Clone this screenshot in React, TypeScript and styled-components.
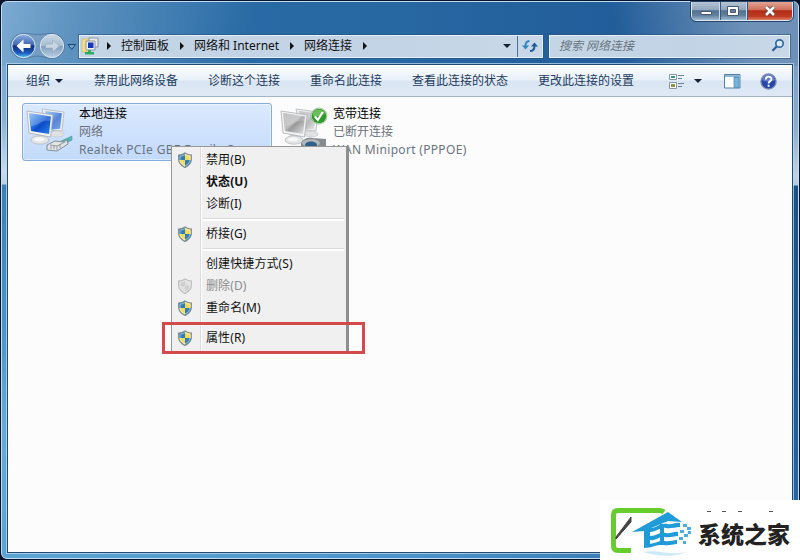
import React from "react";
import styled, { createGlobalStyle, css } from "styled-components";

const Global = createGlobalStyle`
  * { box-sizing: border-box; }
  body { margin: 0; overflow: hidden; background: #0b1c38; }
`;

const Desktop = styled.div`
  position: relative;
  width: 800px;
  height: 560px;
  overflow: hidden;
  background: #07142e;
  font: 12px/18px "Noto Sans", "Noto Sans CJK SC", sans-serif;
  color: #111;
  white-space: nowrap;
`;

const Frame = styled.div`
  display: flex;
  flex-direction: column;
  width: 798px;
  height: 558px;
  margin: 0 1px;
  position: relative;
  top: 1px;
  border: 1px solid #c3dcf0;
  border-radius: 6px;
  padding: 0 5px 5px;
  background:
    linear-gradient(100deg, rgba(150, 190, 222, 0.75) 0, rgba(130, 172, 208, 0.6) 70px, rgba(60, 120, 175, 0) 250px) 0 0 / 100% 64px no-repeat,
    linear-gradient(80deg, rgba(120, 150, 185, 0) 610px, rgba(125, 155, 190, 0.85) 740px) 0 0 / 100% 64px no-repeat,
    linear-gradient(#7fa9cf 0, #86afd2 50px, #c5dcec 105px, #b9d5e8 118px, #3981b2 119px, #4c97c8 270px, #65abd8 360px, #5aa4d2 490px) 0 64px / 6px 100% no-repeat,
    linear-gradient(#7f9fc2 0, #8fabc9 60px, #c3d3e4 110px, #b5cadd 119px, #1c5387 120px, #1e5990 300px, #2a6da8 490px) 790px 64px / 6px 100% no-repeat,
    linear-gradient(90deg, #5aa5d3, #4c94c8 50%, #2a6aa4) 0 100% / 100% 7px no-repeat,
    linear-gradient(90deg, #2b70aa, #2767a2 50%, #1c5593);
`;

const TitleBar = styled.div`
  display: flex;
  justify-content: flex-end;
  height: 32px;
  flex: none;
`;

const Caption = styled.div`
  display: flex;
  height: 19px;
  border: 1px solid #dde8f2;
  border-top: 0;
  border-radius: 0 0 5px 5px;
  overflow: hidden;
  outline: 1px solid #24466c;
`;

const CaptionButton = styled.div<{ $w: number; $close?: boolean }>`
  display: grid;
  place-items: center;
  width: ${(p) => p.$w}px;
  border-left: 1px solid #c9d8e7;
  box-shadow: inset 1px 0 0 #39597c;
  background: ${(p) =>
    p.$close
      ? "linear-gradient(#e3a493, #cf6e5a 45%, #b32d16 48%, #bd3b22 80%, #e08067)"
      : "linear-gradient(#b5c4d4, #8fa5bc 45%, #52708f 48%, #64829f 75%, #9fbcd5)"};
  &:first-child { border-left: 0; box-shadow: none; }
`;

const NavRow = styled.div`
  display: flex;
  align-items: center;
  height: 24px;
  flex: none;
  padding-left: 2px;
`;

const NavButtons = styled.div`
  width: 70px;
  height: 28px;
  flex: none;
`;

const Field = styled.div<{ $w: number; $gap?: number }>`
  display: flex;
  align-items: center;
  width: ${(p) => p.$w}px;
  height: 23px;
  flex: none;
  margin-left: ${(p) => p.$gap ?? 0}px;
  border: 1px solid #e4eef7;
  box-shadow: 0 0 0 1px rgba(44, 84, 125, 0.6);
  background: linear-gradient(90deg, #c4d5e5, #c1d3e5 60%, #c8d8e8);
`;

const AddressIcon = styled.div`
  width: 21px;
  height: 19px;
  margin-left: 1px;
`;

const Crumb = styled.span<{ $w: number }>`
  width: ${(p) => p.$w}px;
`;

const Arrow = styled.i<{ $dir: "right" | "down"; $m: string }>`
  width: 0;
  height: 0;
  flex: none;
  margin: ${(p) => p.$m};
  ${(p) =>
    p.$dir === "right"
      ? css`border: solid transparent; border-width: 4px 0 4px 4px; border-left-color: #111;`
      : css`border: solid transparent; border-width: 4px 4px 0; border-top-color: #122135;`}
`;

const Refresh = styled.div`
  display: grid;
  place-items: center;
  height: 21px;
  border-left: 1px solid #4a7196;
`;

const Placeholder = styled.span`
  flex: 1;
  padding-left: 9px;
  font-style: italic;
  color: #6b7681;
`;

const Client = styled.div`
  display: flex;
  flex-direction: column;
  flex: 1;
  margin-top: 6px;
  border: 1px solid #244a70;
  outline: 1px solid rgba(190, 218, 240, 0.75);
  background: #fcfcfc;
`;

const Toolbar = styled.div`
  display: flex;
  align-items: center;
  gap: 30px;
  height: 32px;
  flex: none;
  padding: 0 15px 0 18px;
  border-top: 1px solid #fff;
  border-bottom: 1px solid #a3b4c9;
  background: linear-gradient(#fafcfe, #e9f1fa 46%, #dae5f3 50%, #dfe9f6);
  color: #223b5c;
`;

const Organize = styled.span`
  display: flex;
  align-items: center;
  width: 38px;
`;

const Tools = styled.div`
  display: flex;
  align-items: center;
  margin-left: auto;
`;

const HelpButton = styled.span`
  display: flex;
  margin-left: 19px;
`;

const Connections = styled.div`
  display: flex;
  gap: 4px;
  padding: 6px 14px;
`;

const Connection = styled.div<{ $selected?: boolean }>`
  display: flex;
  width: 250px;
  height: 58px;
  border: 1px solid ${(p) => (p.$selected ? "#84acdd" : "transparent")};
  border-radius: 3px;
  background: ${(p) => (p.$selected ? "linear-gradient(#dbe9fd, #c2dafb)" : "none")};
  box-shadow: ${(p) => (p.$selected ? "inset 0 0 0 1px rgba(255,255,255,.45)" : "none")};
`;

const ConnectionIcon = styled.div`
  width: 56px;
  flex: none;
`;

const Lines = styled.div`
  color: #6d737b;
  line-height: 18px;
  padding-top: 1px;
`;

const Name = styled.div`
  color: #000;
`;

const Device = styled.div`
  letter-spacing: 0.32px;
`;

const Menu = styled.div`
  position: absolute;
  left: 171px;
  top: 146px;
  width: 178px;
  height: 206px;
  padding: 2px 2px 0;
  border: 1px solid #979797;
  border-right: 3px solid #8e8e8e;
  border-bottom-color: #777;
  background: linear-gradient(90deg, #f0f0f0 28px, #dcdcdc 28px, #dcdcdc 29px, #fff 29px, #fff 30px, #f0f0f0 30px);
`;

const MenuItem = styled.div<{ $bold?: boolean; $off?: boolean }>`
  display: flex;
  align-items: center;
  height: 22px;
  font-weight: ${(p) => (p.$bold ? 700 : 400)};
  letter-spacing: 0.1px;
  color: ${(p) => (p.$off ? "#8c8c8c" : "#101010")};
`;

const MenuIcon = styled.span`
  display: flex;
  width: 32px;
  padding-left: 3px;
`;

const Separator = styled.div`
  height: 8px;
  padding-top: 3px;
  margin-left: 29px;
  &::after {
    content: "";
    display: block;
    height: 2px;
    background: #fff;
    border-top: 1px solid #dcdcdc;
  }
`;

const Highlight = styled.div`
  position: absolute;
  left: 162px;
  top: 322px;
  width: 203px;
  height: 32px;
  border: 3px solid #d24a4a;
`;

const Watermark = styled.div`
  position: absolute;
  left: 600px;
  top: 500px;
  width: 200px;
  height: 60px;
  display: flex;
  background: #fff;
`;

const Brand = styled.div`
  position: relative;
  padding-top: 19px;
  font: 900 23px/28px "Noto Sans CJK SC", sans-serif;
  color: #222;
`;

const Specks = styled.div`
  position: absolute;
  left: 9px;
  top: 11px;
  width: 68px;
  height: 1px;
  background: linear-gradient(90deg, #555 4px, transparent 4px 15px, #555 15px 19px, transparent 19px 31px, #555 31px 35px, transparent 35px 62px, #555 62px 66px, transparent 66px);
`;

const Shield = ({ off }: { off?: boolean }) => {
  const blue = off ? "#cfcfcf" : "#2f7fb5";
  const gold = off ? "#dedede" : "#f3d95c";
  const d = "M8 1C6 2.4 4 3 1.7 3v4.6c0 3.6 2.5 6 6.3 7.9 3.8-1.9 6.3-4.3 6.3-7.900V3C12 3 10 2.400 8 1z";
  const id = off ? "sh-off" : "sh-on";
  return (
    <svg width="16" height="16" viewBox="0 0 16 16">
      <clipPath id={id}><path d={d} /></clipPath>
      <g clipPath={`url(#${id})`}>
        <path fill={gold} d="M0 0h8v8H0zM8 8h8v8H8z" />
        <path fill={blue} d="M0 0h8v8H0zM8 8h8v8H8z" />
        <path fill={gold} d="M8 0h8v8H8zM0 8h8v8H0z" />
      </g>
      <path d={d} fill="none" stroke={off ? "#bdbdbd" : "#7c8a94"} strokeWidth="1.2" />
      <path d="M8 2.6C6.4 3.6 5 4 3 4.2v3.4c0 3 2 4.8 5 6.400 3-1.600 5-3.400 5-6.400V4.200C11 4 9.600 3.600 8 2.600z" fill="none" stroke="#fff" strokeOpacity=".65" strokeWidth=".8" />
    </svg>
  );
};

const Computers = ({ kind }: { kind: "lan" | "wan" }) => {
  const lan = kind === "lan";
  return (
    <svg width="56" height="56" viewBox="0 0 56 56">
      <defs>
        <linearGradient id={`scr-${kind}`} x1="0" y1="0" x2="1" y2="1">
          <stop offset="0" stopColor={lan ? "#7db8f5" : "#b0b0b0"} />
          <stop offset=".45" stopColor={lan ? "#1e66dc" : "#bcbcbc"} />
          <stop offset=".55" stopColor={lan ? "#0b4ac8" : "#999999"} />
          <stop offset="1" stopColor={lan ? "#2f86ec" : "#e5e5e5"} />
        </linearGradient>
      </defs>
      <path d="M19 5l22 3-2 19-16-1z" fill="#eceeef" stroke="#b1b8bd" strokeWidth=".8" />
      <path d="M22 7l17 2.300-2 15.500-10 1z" fill={`url(#scr-${kind})`} opacity=".65" />
      <ellipse cx="34" cy="30" rx="7" ry="3" fill="#dfe1e3" stroke="#bcc0c4" strokeWidth=".6" />
      <path d="M13 28h8v7h-8z" fill="#d4d6d8" />
      <ellipse cx="17" cy="36" rx="9" ry="4.200" fill="#e3e5e6" stroke="#b2b5b8" strokeWidth=".7" />
      <ellipse cx="16" cy="35.300" rx="5.500" ry="2" fill="#f8f8f8" />
      <path d="M4 7l26 4-2.500 22L6 29z" fill="#f2f3f3" stroke="#a9afb4" strokeWidth=".8" />
      <path d="M6 9l22 3.400-2 17.600L8 27z" fill={`url(#scr-${kind})`} />
      <path d="M6 9l22 3.400-.6 4.600C19 15 14 22 8 22z" fill="#fff" opacity=".22" />
      {lan ? (
        <g strokeLinejoin="round">
          <path d="M38 37l11-5v4l-9 5z" fill="#53b5b4" stroke="#5d9b9c" strokeWidth=".6" />
          <path d="M24 41l8-4 8 1 4-2 1 4-11 7-10-1z" fill="#e2e5e7" stroke="#7d858b" strokeWidth=".9" />
          <path d="M27 41l7 1 8-4M34 42v4M28 42v3M31 42v3M37 40v4" fill="none" stroke="#8d969c" strokeWidth=".9" />
        </g>
      ) : (
        <g>
          <path d="M24 39c2-4 6-6 11-5l14 1v14H24z" fill="#868b8f" />
          <ellipse cx="34" cy="39" rx="9" ry="4" fill="#b2b7bb" />
          <ellipse cx="34" cy="41" rx="6" ry="3.500" fill="#2e5f89" />
          <circle cx="42" cy="12" r="8" fill="#fff" stroke="#6d9f60" strokeWidth=".6" />
          <circle cx="42" cy="12" r="7.300" fill="#2f9a2b" />
          <path d="M36 9a7 7 0 0 1 12 0c-3 3-8 4-12 3z" fill="#8bd17a" opacity=".65" />
          <path d="M37.800 12.400l3 3.600 5-8" fill="none" stroke="#fff" strokeWidth="2.200" />
        </g>
      )}
    </svg>
  );
};

const HistoryNav = () => (
  <svg width="70" height="28" viewBox="0 0 70 28">
    <defs>
      <linearGradient id="back" x1="0" y1="0" x2="0" y2="1">
        <stop offset="0" stopColor="#8daee0" /><stop offset=".45" stopColor="#4067b4" />
        <stop offset=".5" stopColor="#12307e" /><stop offset=".8" stopColor="#1b5bbd" /><stop offset="1" stopColor="#55c7f4" />
      </linearGradient>
      <linearGradient id="fwd" x1="0" y1="0" x2="0" y2="1">
        <stop offset="0" stopColor="#cbd9e6" /><stop offset=".48" stopColor="#a7bdd0" />
        <stop offset=".52" stopColor="#829fba" /><stop offset="1" stopColor="#b7cfe2" />
      </linearGradient>
    </defs>
    <path d="M14 1.500C20 1.500 23 2.500 28.500 2.500S37 1.500 43 1.500a12.500 12.500 0 0 1 0 25c-6 0-9-2.500-14.500-2.500S20 26.500 14 26.500a12.500 12.500 0 0 1 0-25z" fill="#7c9fc0" opacity=".65" stroke="#44698f" />
    <circle cx="14.500" cy="14" r="11.600" fill="url(#back)" stroke="#dce8f4" strokeWidth="1" />
    <path d="M7.500 14l7-6.500v4.500h7v4h-7v4.500z" fill="#fff" />
    <circle cx="43" cy="14" r="11.600" fill="url(#fwd)" stroke="#dce8f4" strokeWidth="1" />
    <path d="M50.500 14l-7-6v4h-7v4h7v4z" fill="#c7d5e1" stroke="#8fa8be" strokeWidth=".6" />
    <path d="M59 12.500h7.500l-3.750 5z" fill="#76a4cd" stroke="#174574" strokeWidth="1" />
  </svg>
);

const Logo = () => (
  <svg width="98" height="60" viewBox="0 0 98 60">
    <path d="M64 12Q62 10.500 59 10.500H18q-4.500 0-4.500 4.500v31q0 4.500 4.500 4.500h13" fill="none" stroke="#67cc2e" strokeWidth="5" />
    <path d="M16 37l15-20v5L16 39z" fill="#444" stroke="#444" />
    <path d="M32 32L68 12l14 10-14-1-24 10z" fill="#1f9bd9" />
    <path d="M44 28h6v19h-6zM50 28c8 0 9-5 17-4 6 1 8-2 13-1v4c-5 0-9 2-14 1-6-1-9 4-16 4zM50 36c7 0 9-4 16-3 5 1 8-2 12-1v4c-4 0-8 2-13 1-6-1-8 4-15 3zM44 44c11 1 14-4 21-3 4 1 8-1 12-1v4c-4 0-8 2-13 1-7-1-11 3-20 3z" fill="#1f9bd9" />
    <path d="M60 24h4v21h-4z" fill="#1f9bd9" />
    <path d="M83 24h4v3h-4zM87 27h4v3h-4zM80 30h4v3h-4zM84 34h4v3h-4zM88 31h3v3h-3zM79 37h4v3h-4zM83 41h3v3h-3z" fill="#4bafdf" />
    <path d="M43 52c13-3 28 4 43 0-12 6-29 4-43 0z" fill="#9ad3ef" opacity=".5" />
  </svg>
);

const items = [
  { t: "禁用(B)", shield: true },
  { t: "状态(U)", bold: true },
  { t: "诊断(I)" },
  null,
  { t: "桥接(G)", shield: true },
  null,
  { t: "创建快捷方式(S)" },
  { t: "删除(D)", shield: true, off: true },
  { t: "重命名(M)", shield: true },
  null,
  { t: "属性(R)", shield: true },
];

export default function App() {
  return (
    <Desktop>
      <Global />
      <Frame>
        <TitleBar>
          <Caption>
            <CaptionButton $w={27}>
              <svg width="14" height="12"><path d="M2 6.500h10.500v3H2z" fill="#fff" stroke="#495a70" /></svg>
            </CaptionButton>
            <CaptionButton $w={27}>
              <svg width="14" height="12"><path d="M1.500 1.500h11v9h-11z" fill="#fff" stroke="#495a70" /><path d="M4.500 4.500h5v3h-5z" fill="#66809b" stroke="#495a70" /></svg>
            </CaptionButton>
            <CaptionButton $w={46} $close>
              <svg width="14" height="12"><path d="M3 2l8 8M11 2l-8 8" stroke="#663d3c" strokeWidth="4.200" /><path d="M3 2l8 8M11 2l-8 8" stroke="#fff" strokeWidth="2.600" /></svg>
            </CaptionButton>
          </Caption>
        </TitleBar>
        <NavRow>
          <NavButtons><HistoryNav /></NavButtons>
          <Field $w={464}>
            <AddressIcon>
              <svg width="20" height="19">
                <path d="M1 2h7v13H1z" fill="#f3df87" stroke="#cfb654" strokeWidth=".6" />
                <path d="M8 1h9v9H8z" fill="#e9ebed" stroke="#8c949d" /><path d="M5 4h9v9H5z" fill="#f3f3f3" stroke="#8c949d" />
                <path d="M7 5.500h5.500V11H7z" fill="#1636b5" /><path d="M7 13h3v2h3v2.500H4V15h3z" fill="#31a968" />
              </svg>
            </AddressIcon>
            <Arrow $dir="right" $m="0 10px 0 5px" />
            <Crumb $w={48}>控制面板</Crumb>
            <Arrow $dir="right" $m="0 10px 0 11px" />
            <Crumb $w={86}>网络和 Internet</Crumb>
            <Arrow $dir="right" $m="0 10px 0 10px" />
            <Crumb $w={48}>网络连接</Crumb>
            <Arrow $dir="right" $m="0 auto 0 11px" />
            <Arrow $dir="down" $m="0 6px 0 0" />
            <Refresh>
              <svg width="24" height="18" viewBox="0 0 24 18">
                <path d="M11.500 4C8.500 4 7.500 5.500 7.500 9" fill="none" stroke="#3287c4" strokeWidth="2" /><path d="M4 8.500h7L7.500 12.500z" fill="#3287c4" />
                <path d="M12 14c3.500 0 4.500-1.500 4.500-5" fill="none" stroke="#1f5c9c" strokeWidth="2" /><path d="M13 9.500h7L16.500 5.500z" fill="#1f5c9c" />
              </svg>
            </Refresh>
          </Field>
          <Field $w={241} $gap={6}>
            <Placeholder>搜索 网络连接</Placeholder>
            <svg width="20" height="18">
              <circle cx="10.500" cy="6.500" r="3.700" fill="#dceaf5" stroke="#2c6ba8" strokeWidth="1.700" />
              <path d="M7.700 9.500L3.500 13.700" stroke="#2c5b91" strokeWidth="2.300" />
            </svg>
          </Field>
        </NavRow>
        <Client>
          <Toolbar>
            <Organize>组织<Arrow $dir="down" $m="0 0 0 5px" /></Organize>
            <span>禁用此网络设备</span>
            <span>诊断这个连接</span>
            <span>重命名此连接</span>
            <span>查看此连接的状态</span>
            <span>更改此连接的设置</span>
            <Tools>
              <svg width="17" height="17">
                <path d="M1.500 1.500h7v5h-7zM1.500 9.500h7v6h-7z" fill="#fff" stroke="#8498a5" />
                <path d="M3 3h4v2H3z" fill="#3b9390" /><path d="M3 11h4v3H3z" fill="#8f9543" />
                <path d="M10 2.500h6M10 5.500h4M10 10.500h6M10 13.500h4" stroke="#6e8299" />
              </svg>
              <Arrow $dir="down" $m="0 22px 0 9px" />
              <svg width="17" height="15">
                <path d="M.5.500h15.500v13.500H.5z" fill="#fff" stroke="#5281a4" /><path d="M1 1h15v2H1z" fill="#8dbad9" />
                <path d="M10 3h5v10.500h-5z" fill="#74b5dc" stroke="#4b83ad" strokeWidth=".7" />
              </svg>
              <HelpButton>
                <svg width="17" height="17">
                  <circle cx="8.500" cy="8.500" r="7.600" fill="#2547a8" stroke="#8090ab" strokeWidth="1.300" />
                  <path d="M2 7a6.600 6.600 0 0 1 13 0c-4 2-9 2-13 0z" fill="#849cd8" opacity=".65" />
                  <path d="M5.800 6.500c0-4 5.800-3.500 5.600-.3C11.300 8.300 8.600 8 8.600 10.500M8.600 11.700v2" fill="none" stroke="#fff" strokeWidth="1.900" />
                </svg>
              </HelpButton>
            </Tools>
          </Toolbar>
          <Connections>
            <Connection $selected>
              <ConnectionIcon><Computers kind="lan" /></ConnectionIcon>
              <Lines><Name>本地连接</Name><div>网络</div><Device>Realtek PCIe GBE Family C...</Device></Lines>
            </Connection>
            <Connection>
              <ConnectionIcon><Computers kind="wan" /></ConnectionIcon>
              <Lines><Name>宽带连接</Name><div>已断开连接</div><Device>WAN Miniport (PPPOE)</Device></Lines>
            </Connection>
          </Connections>
        </Client>
      </Frame>
      <Menu>
        {items.map((it, i) =>
          it ? (
            <MenuItem key={i} $bold={it.bold} $off={it.off}>
              <MenuIcon>{it.shield && <Shield off={it.off} />}</MenuIcon>
              {it.t}
            </MenuItem>
          ) : (
            <Separator key={i} />
          )
        )}
      </Menu>
      <Highlight />
      <Watermark>
        <Logo />
        <Brand><Specks />系统之家</Brand>
      </Watermark>
    </Desktop>
  );
}
